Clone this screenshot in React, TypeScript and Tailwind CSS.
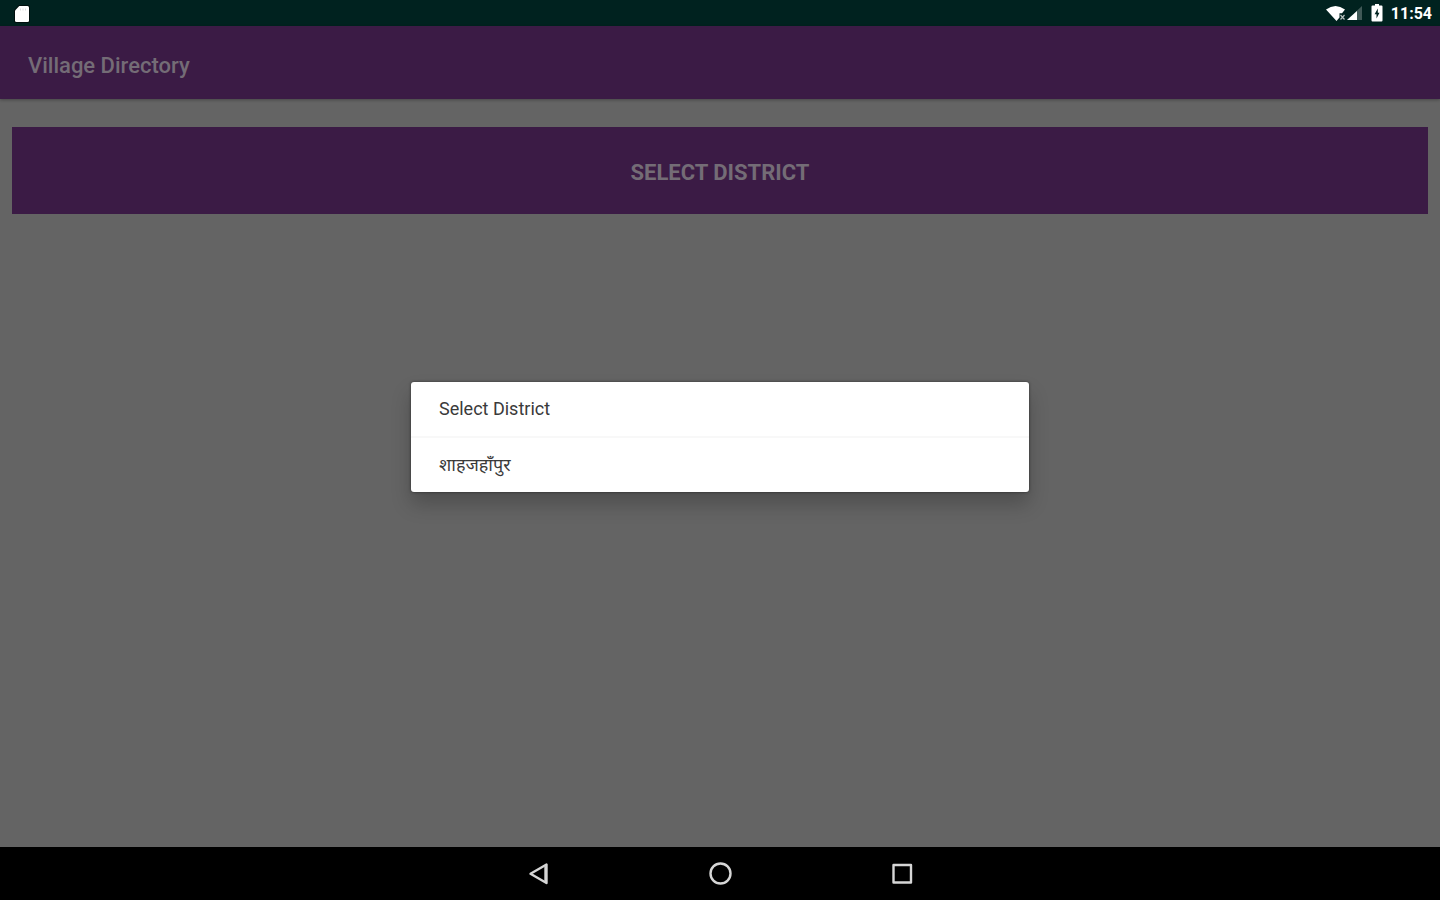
const districts = ["Select District", "शाहजहाँपुर"];

function StatusBar() {
  return (
    <div className="flex h-[26px] items-center justify-between bg-[#00221f] pt-[2px] pr-2 pl-[14px] text-white">
      <svg className="h-4 w-4 overflow-visible" viewBox="0 0 16 16" role="img" aria-label="SD card">
        <path
          d="M5.300 0H13.500a1.500 1.500 0 0 1 1.500 1.500V14.500a1.500 1.500 0 0 1-1.500 1.500H2.500A1.500 1.500 0 0 1 1 14.500V4.500Z"
          fill="#fff"
          stroke="#000"
          strokeOpacity=".55"
          strokeWidth="2"
          paintOrder="stroke"
        />
        <path d="M6.500 2.500v2M9 2.500v2M11.500 2.500v2" stroke="#dcdcdc" strokeWidth="1" />
      </svg>
      <div className="flex items-center">
        <svg className="h-5 w-[38px]" viewBox="0 0 38 20" role="img" aria-label="Wi-Fi and mobile signal">
          <path d="M0 5.500Q9.500-1.500 19 5.500L16 9.200H13.500V13.500L10.500 17Z" fill="#fff" />
          <path d="M14.500 11l4 4.500M18.500 11l-4 4.500" stroke="#b8c2c0" strokeWidth="1.200" />
          <path d="M36 2V16H21Z" fill="#fff" opacity=".25" />
          <path d="M31 7V16H21Z" fill="#fff" />
        </svg>
        <svg className="mb-[2px] ml-[7px] h-[18px] w-3" viewBox="0 0 12 18" role="img" aria-label="Battery charging">
          <path d="M4 0H8V1.500H10.500a1 1 0 0 1 1 1V16.500a1 1 0 0 1-1 1H1.500a1 1 0 0 1-1-1V2.500a1 1 0 0 1 1-1H4Z" fill="#fff" />
          <path d="M6.800 4.500L3.600 10.300H5.500V14.500L8.500 8.800H6.800Z" fill="#00221f" />
        </svg>
        <time className="ml-2 text-base leading-5 font-bold">11:54</time>
      </div>
    </div>
  );
}

function NavigationBar() {
  const button = "flex h-8 w-8 items-center justify-center";
  return (
    <nav className="flex h-[53px] items-center justify-center gap-[150px] bg-black text-[#d6d6d6]">
      <button type="button" aria-label="Back" className={button}>
        <svg className="h-6 w-6" viewBox="0 0 24 24" fill="none" stroke="currentColor" strokeWidth="2.400" strokeLinejoin="round">
          <path d="M20.500 2.500V21L4.500 11.750Z" />
          <path d="M19.500 4.500V19" />
        </svg>
      </button>
      <button type="button" aria-label="Home" className={button}>
        <svg className="h-6 w-6" viewBox="0 0 24 24" fill="none" stroke="currentColor" strokeWidth="2.400">
          <circle cx="12.500" cy="11.500" r="10" />
        </svg>
      </button>
      <button type="button" aria-label="Recent apps" className={button}>
        <svg className="h-6 w-6" viewBox="0 0 24 24" fill="none" stroke="currentColor" strokeWidth="2.400" strokeLinejoin="round">
          <rect x="3.500" y="3" width="17.500" height="17.500" />
        </svg>
      </button>
    </nav>
  );
}

function DistrictDialog() {
  return (
    <div className="absolute inset-0 flex items-center justify-center">
      <div
        role="dialog"
        aria-label="Select District"
        className="w-[43%] max-w-[618px] rounded-[3px] bg-white shadow-[0_0_3px_rgba(0,0,0,0.5),0_12px_20px_rgba(0,0,0,0.22)]"
      >
        <ul className="divide-y-2 divide-[#f8f8f8]">
          {districts.map((name) => (
            <li key={name}>
              <button type="button" className="flex h-[54px] w-full items-center px-7 text-left text-lg leading-6 text-[#3a3a3a]">
                {name}
              </button>
            </li>
          ))}
        </ul>
      </div>
    </div>
  );
}

export default function App() {
  return (
    <div className="flex min-h-screen flex-col bg-[#646464] font-['Roboto','Noto_Sans',sans-serif]">
      <StatusBar />
      <div className="relative flex flex-1 flex-col">
        <header className="flex h-[73px] items-center bg-[#3b1b45] px-7 pt-[6px] shadow-[0_1px_3px_rgba(0,0,0,0.3)]">
          <h1 className="text-[22px] leading-7 font-medium text-[#746c76]">Village Directory</h1>
        </header>
        <main className="flex flex-1 flex-col px-3 pt-7">
          <button type="button" className="h-[87px] w-full bg-[#3b1b45] pt-1 text-[22px] leading-7 font-bold text-[#746c76] uppercase">
            Select District
          </button>
        </main>
        <DistrictDialog />
      </div>
      <NavigationBar />
    </div>
  );
}
